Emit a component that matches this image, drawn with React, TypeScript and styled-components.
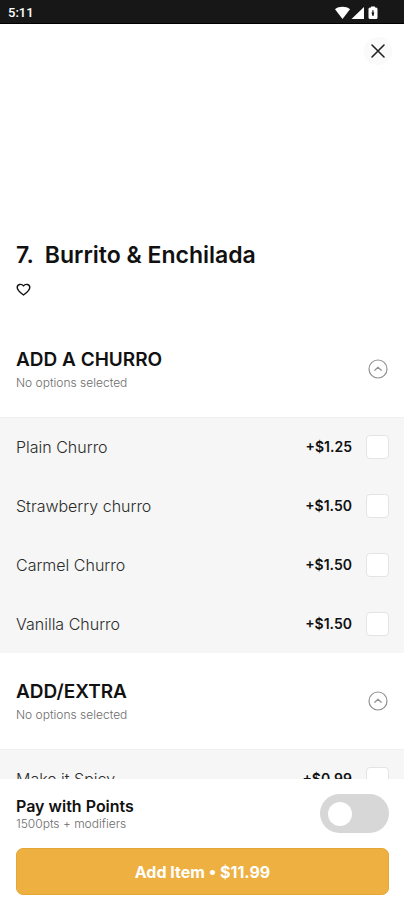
import React, { useId, useState } from "react";
import styled, { createGlobalStyle } from "styled-components";

const GlobalStyle = createGlobalStyle`
  *, *::before, *::after { box-sizing: border-box; }
  body { margin: 0; background: #fff; }
  button, input { font: inherit; }
`;

const Screen = styled.div`
  display: flex;
  flex-direction: column;
  height: 100vh;
  background: #fff;
  color: #111;
  font-family: Inter, "Liberation Sans", sans-serif;
`;

const StatusBar = styled.header`
  flex: none;
  display: flex;
  align-items: center;
  justify-content: space-between;
  height: 24px;
  padding: 2px 24px 0 8px;
  background: #171717;
  border-bottom: 1px solid #000;
  color: #fff;
`;

const Clock = styled.time`
  font: 500 13px/16px Roboto, sans-serif;
`;

const StatusIcons = styled.svg`
  display: block;
  width: 46px;
  height: 14px;
`;

const Content = styled.main`
  flex: 1;
  min-height: 0;
  overflow-y: auto;
  scrollbar-width: none;
`;

const Hero = styled.div`
  display: flex;
  justify-content: flex-end;
  height: 217px;
  padding: 13px 12px;
`;

const IconButton = styled.button<{ $size: number; $fill?: string }>`
  flex: none;
  display: grid;
  place-items: center;
  width: ${(p) => p.$size}px;
  height: ${(p) => p.$size}px;
  padding: 0;
  border: 0;
  border-radius: 50%;
  background: ${(p) => p.$fill ?? "transparent"};
  color: inherit;
  cursor: pointer;
`;

const Intro = styled.section`
  padding: 0 16px 24px;
`;

const Title = styled.h1`
  margin: 0 0 13px;
  font-size: 23px;
  font-weight: 600;
  line-height: 28px;
  white-space: pre-wrap;
`;

const GroupHeader = styled.div`
  display: flex;
  align-items: center;
  justify-content: space-between;
  height: 96px;
  padding: 0 15px 0 16px;
`;

const GroupTitle = styled.h2`
  margin: 0 0 3px;
  font-size: 19px;
  font-weight: 600;
  line-height: 24px;
`;

const Note = styled.p`
  margin: 0;
  color: #6c6c6c;
  font-size: 12px;
  font-weight: 300;
  line-height: 16px;
`;

const OptionList = styled.ul`
  margin: 0;
  padding: 0;
  list-style: none;
  background: #f6f6f6;
  box-shadow: inset 0 1px #f0f0f0;
`;

const Option = styled.label`
  display: flex;
  align-items: center;
  height: 59px;
  padding: 0 15px 0 16px;
  cursor: pointer;
`;

const OptionName = styled.span`
  flex: 1;
  color: #2b2b2b;
  font-size: 16px;
  font-weight: 300;
  line-height: 20px;
`;

const Price = styled.span`
  margin-right: 14px;
  font-size: 14px;
  font-weight: 600;
  line-height: 20px;
`;

const Checkbox = styled.input`
  appearance: none;
  width: 23px;
  height: 24px;
  margin: 0;
  border: 1px solid #e4e4e4;
  border-radius: 4px;
  background: #fff;
  cursor: pointer;
  &:checked { background: #efb03f; }
`;

const Footer = styled.footer`
  flex: none;
  padding: 15px 15px 5px 16px;
  background: #fff;
`;

const PointsRow = styled.div`
  display: flex;
  align-items: center;
  justify-content: space-between;
  margin-bottom: 15px;
`;

const PointsLabel = styled.label`
  display: block;
  font-size: 16px;
  font-weight: 600;
  line-height: 20px;
`;

const Switch = styled.input`
  appearance: none;
  display: flex;
  align-items: center;
  width: 69px;
  height: 39px;
  margin: 0;
  padding: 0 8px;
  border-radius: 20px;
  background: #d7d7d7;
  cursor: pointer;
  &::before {
    content: "";
    width: 24px;
    height: 24px;
    border-radius: 50%;
    background: #fff;
  }
  &:checked { justify-content: flex-end; background: #efb03f; }
`;

const AddButton = styled.button`
  display: block;
  width: 100%;
  height: 47px;
  border: 1px solid #e5a636;
  border-radius: 7px;
  background: #eeb040;
  color: #fff;
  font-size: 16px;
  font-weight: 700;
  line-height: 20px;
  cursor: pointer;
`;

type Item = { name: string; price: string };

function OptionGroup({ title, items }: { title: string; items: Item[] }) {
  const [open, setOpen] = useState(true);
  return (
    <section>
      <GroupHeader>
        <div>
          <GroupTitle>{title}</GroupTitle>
          <Note>No options selected</Note>
        </div>
        <IconButton $size={22} aria-label={`Toggle ${title}`} aria-expanded={open} onClick={() => setOpen(!open)}>
          <svg width="22" height="22" viewBox="0 0 22 22" fill="none" stroke="#929292" strokeWidth="1.2">
            <circle cx="11" cy="11" r="9" />
            <path d="M7.8 12.3 11 9.2l3.2 3.1" strokeLinecap="round" strokeLinejoin="round" />
          </svg>
        </IconButton>
      </GroupHeader>
      {open && (
        <OptionList>
          {items.map((item) => (
            <li key={item.name}>
              <Option>
                <OptionName>{item.name}</OptionName>
                <Price>{item.price}</Price>
                <Checkbox type="checkbox" />
              </Option>
            </li>
          ))}
        </OptionList>
      )}
    </section>
  );
}

const churros: Item[] = [
  { name: "Plain Churro", price: "+$1.25" },
  { name: "Strawberry churro", price: "+$1.50" },
  { name: "Carmel Churro", price: "+$1.50" },
  { name: "Vanilla Churro", price: "+$1.50" },
];

const extras: Item[] = [{ name: "Make it Spicy", price: "+$0.99" }];

export default function App() {
  const pointsId = useId();
  return (
    <Screen>
      <GlobalStyle />
      <StatusBar>
        <Clock>5:11</Clock>
        <StatusIcons viewBox="0 0 46 14" fill="#fff" aria-hidden="true">
          <path d="M1 3.2C5.2 0 11.8 0 16 3.2L8.5 13Z" />
          <path d="M30 1v12H17.5Z" />
          <path
            fillRule="evenodd"
            d="M37 1.5V.5h4v1h1q1.5 0 1.5 1.5v8.5q0 1.5-1.5 1.5h-6q-1.5 0-1.5-1.5V3q0-1.5 1.5-1.5ZM38.3 4.300v2.2H37.5L38.5 10h1L40.3 6.5h-.8V4.3Z"
          />
        </StatusIcons>
      </StatusBar>
      <Content>
        <Hero>
          <IconButton $size={28} $fill="#fafafa" aria-label="Close">
            <svg width="16" height="16" viewBox="0 0 16 16" fill="none" stroke="#222" strokeWidth="1.6" strokeLinecap="round">
              <path d="M2 2l12 12M14 2 2 14" />
            </svg>
          </IconButton>
        </Hero>
        <Intro>
          <Title>{"7.  Burrito & Enchilada"}</Title>
          <IconButton $size={15} aria-label="Add to favorites">
            <svg width="15" height="15" viewBox="0 0 16 16" fill="none" stroke="#111" strokeWidth="1.5" strokeLinejoin="round">
              <path d="M8 13.8C5 11.6 1.3 9 1.3 5.8 1.3 2.4 5.8 1.3 8 4.2c2.2-2.9 6.7-1.8 6.7 1.6C14.7 9 11 11.6 8 13.8Z" />
            </svg>
          </IconButton>
        </Intro>
        <OptionGroup title="ADD A CHURRO" items={churros} />
        <OptionGroup title="ADD/EXTRA" items={extras} />
      </Content>
      <Footer>
        <PointsRow>
          <div>
            <PointsLabel htmlFor={pointsId}>Pay with Points</PointsLabel>
            <Note>1500pts + modifiers</Note>
          </div>
          <Switch id={pointsId} type="checkbox" role="switch" />
        </PointsRow>
        <AddButton type="button">Add Item • $11.99</AddButton>
      </Footer>
    </Screen>
  );
}
